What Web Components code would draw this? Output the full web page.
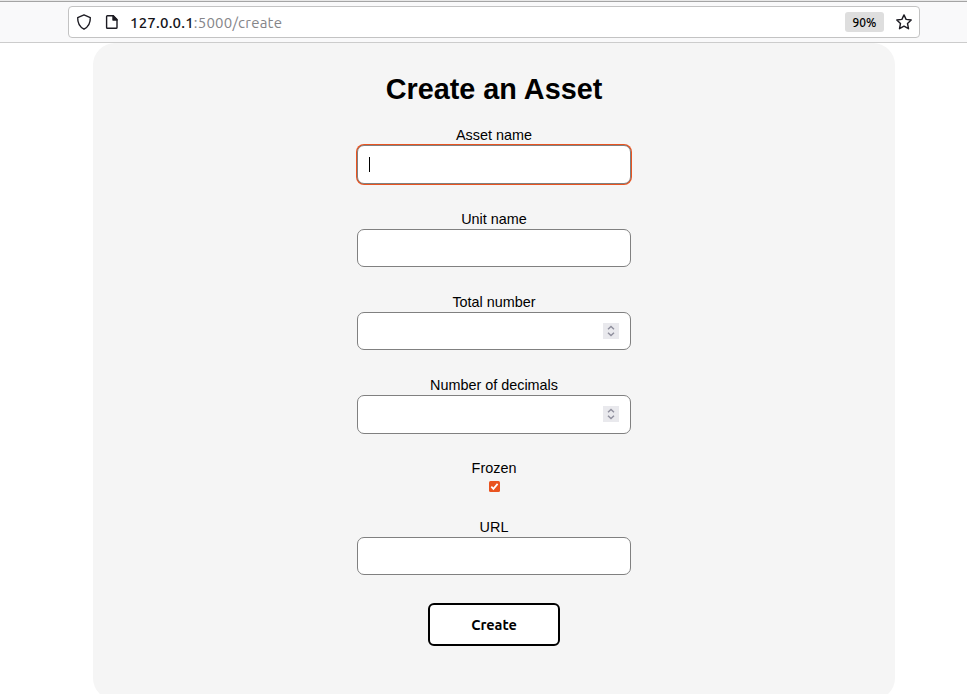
<!DOCTYPE html>
<html lang="en"><head><meta charset="utf-8"><title>Create an Asset</title>
<style>html,body{margin:0;height:100%;overflow:hidden;background:#fff}body{font-family:"Liberation Sans",Arial,sans-serif;font-size:14.4px;color:#000}</style></head>
<body>
<address-toolbar></address-toolbar>
<asset-panel>
<form-field label="Asset name" focused></form-field>
<form-field label="Unit name"></form-field>
<form-field label="Total number" number></form-field>
<form-field label="Number of decimals" number style="--h:39px;--pb:1px"></form-field>
<check-field>Frozen</check-field>
<form-field label="URL"></form-field>
<submit-button>Create</submit-button>
</asset-panel>
<script>
const define=(name,render)=>customElements.define(name,class extends HTMLElement{
  connectedCallback(){if(!this.shadowRoot)this.attachShadow({mode:'open'}).innerHTML=render(this);}
});
define('address-toolbar',()=>`<style>
:host{display:block;box-sizing:border-box;height:43px;background:#f9f9fa;border-top:1px solid #e8e8e8;border-bottom:1px solid #ccc;font-family:"Noto Sans",sans-serif}
.line{height:1px;background:#a4a4a4}
.bar{box-sizing:border-box;margin:4px 47px 0 68px;height:32px;border:1px solid #c3c3c3;border-radius:4px;background:#fff;display:flex;align-items:center;padding:0 7px}
svg{display:block;fill:none;stroke:#1c1b22;stroke-width:1.4;stroke-linejoin:round}
.doc{margin-left:12px}
.url{margin-left:10px;padding-top:1px;font-family:Ubuntu,"Noto Sans",sans-serif;font-size:15px;line-height:20px;white-space:nowrap;color:#15141a;letter-spacing:.22px;font-weight:500}
.url span{color:#858589;font-weight:400}
.zoom{margin-left:auto;width:39px;height:20px;border-radius:3px;background:#dedede;text-align:center;font:500 12px/21px Ubuntu,"Noto Sans",sans-serif;margin-right:12px}
</style><div class="line"></div><div class="bar">
<svg width="16" height="16" viewBox="0 0 16 16"><path d="M8 .9 14.3 3.6C14.5 8.5 12.4 12.8 8 15.2 3.6 12.8 1.5 8.5 1.7 3.6Z"/></svg>
<svg class="doc" width="16" height="16" viewBox="0 0 16 16"><path d="M3.4 1.8H9.3L13 5.5V13.4Q13 14.3 12.1 14.3H3.4Q2.6 14.3 2.6 13.4V2.6Q2.6 1.8 3.4 1.8Z"/><path d="M9 1.8V6H13Z" fill="#1c1b22"/></svg>
<div class="url">127.0.0.1<span>:5000/create</span></div><div class="zoom">90%</div>
<svg width="16" height="16" viewBox="0 0 16 16"><path d="M8 .9 10.1 5.4 15.2 6 11.5 9.5 12.5 14.7 8 12.2 3.5 14.7 4.5 9.5 .8 6 5.9 5.4Z"/></svg></div>`);
define('asset-panel',()=>`<style>
:host{display:flex;flex-direction:column;align-items:center;box-sizing:border-box;width:802px;height:657px;margin-left:93px;border-radius:22px;background:#f5f5f5;padding-top:30px}
h1{margin:0 0 21px;font-size:28.8px;line-height:33px;font-weight:700}
</style><h1>Create an Asset</h1><slot></slot>`);
define('form-field',el=>`<style>
:host{display:block;width:274px;margin-bottom:27px}
label{display:block;text-align:center;line-height:17px;height:18px}
.box{box-sizing:border-box;height:var(--h,38px);border:1px solid #808080;border-radius:7px;background:#fff;display:flex;align-items:center;padding:0 11px var(--pb,0)}
:host([focused]) .box{height:39px;box-shadow:0 0 0 1px #e95420}
.caret{width:1px;height:15px;background:#000}
.spin{margin-left:auto;width:16px;height:16px;background:#e9e9ed}
svg{display:block;fill:none;stroke:#8f8f9d;stroke-width:1.4}
</style><label>${el.getAttribute('label')}</label><div class="box">${el.hasAttribute('focused')?'<span class="caret"></span>':''}${el.hasAttribute('number')?'<span class="spin"><svg width="16" height="16" viewBox="0 0 16 16"><path d="M5 6.2 8 3.4 11 6.2M5 9.8 8 12.6 11 9.8"/></svg></span>':''}</div>`);
define('check-field',()=>`<style>
:host{display:flex;flex-direction:column;align-items:center;height:59px;margin-top:-1px;line-height:17px}
svg{display:block;margin:4px 0 0 1px}
</style><slot></slot><svg width="11" height="11" viewBox="0 0 11 11"><rect width="11" height="11" rx="1.5" fill="#e95420"/><path d="M2.3 5.7 4.4 7.9 8.6 2.9" fill="none" stroke="#fff" stroke-width="1.7"/></svg>`);
define('submit-button',()=>`<style>
:host{display:block;margin-top:1px}
button{display:block;box-sizing:border-box;width:132px;height:43px;padding:0;border:2px solid #000;border-radius:6px;background:#fff;color:#000;font:700 14.5px/20px Ubuntu,"Noto Sans",sans-serif}
</style><button><slot></slot></button>`);
</script></body></html>
